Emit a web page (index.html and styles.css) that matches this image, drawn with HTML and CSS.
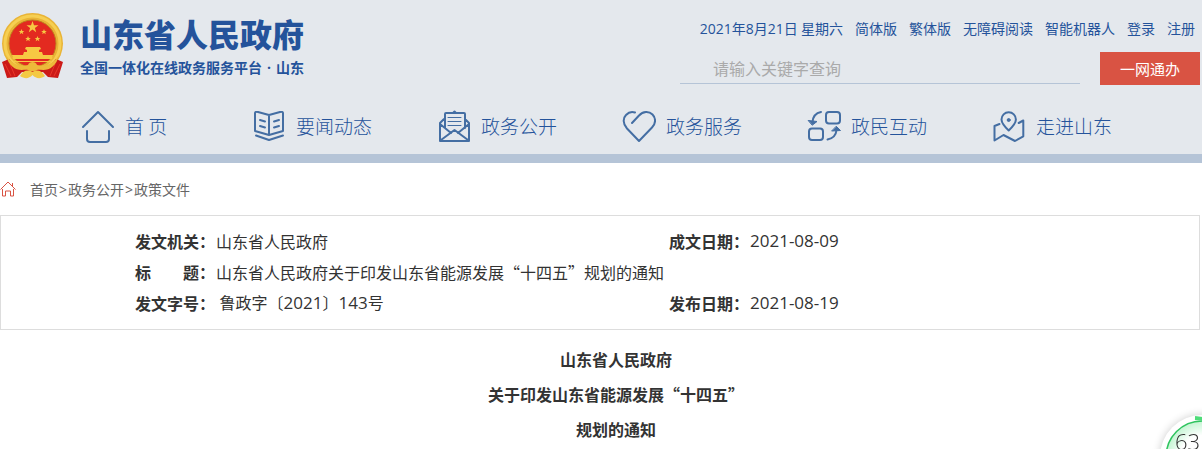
FILE: index.html
```html
<!DOCTYPE html>
<html lang="zh-CN">
<head>
    <meta charset="UTF-8">
    <meta name="viewport" content="width=device-width, initial-scale=1.0">
    <title>山东省人民政府</title>
    <link rel="stylesheet" href="styles.css">
</head>
<body>
    <header class="header">
        <div class="wrap top">
            <a class="logo" href="#">
                <svg class="emblem" viewBox="0 0 64 68" aria-hidden="true">
                    <circle cx="31.5" cy="31.5" r="30.5" fill="#e9b436"/>
                    <circle cx="31.5" cy="31.5" r="27.5" fill="none" stroke="#f6cf52" stroke-width="3"/>
                    <circle cx="31.5" cy="31.5" r="23.5" fill="#e32a20" stroke="#c07d1e"/>
                    <g fill="#f7c843">
                        <path d="M31.5 9l1.500 4.200h4.500l-3.600 2.700 1.300 4.300-3.700-2.600-3.700 2.600 1.300-4.300-3.600-2.700H30z"/>
                        <path d="M20.500 17l.8 2h2l-1.600 1.300.6 2-1.800-1.200-1.800 1.200.6-2-1.600-1.300h2z"/>
                        <path d="M43 17l.8 2h2l-1.600 1.300.6 2L43 21.100l-1.800 1.200.6-2-1.600-1.300h2z"/>
                        <path d="M27 24l.8 2h2l-1.600 1.300.6 2L27 28.100l-1.800 1.200.6-2-1.600-1.300h2z"/>
                        <path d="M36.500 24l.8 2h2l-1.600 1.300.6 2-1.800-1.200-1.800 1.200.6-2-1.600-1.300h2z"/>
                        <path d="M25 35h14l1 2-2 1v2h3l1 3H22l1-3h3v-2l-2-1z"/>
                        <path d="M11 43h41l-1 4H12z"/>
                        <path d="M13 49h37v1H13z"/>
                    </g>
                    <path d="M8 47c6 8 14 11 23.500 11S49 55 55 47l7 3-5 16-10-1-5-5H21l-5 5-10 1L1 50z" fill="#cc1a18"/>
                    <path d="M9 52l5 12M54 52l-5 12M4 52l6 12M59 52l-6 12" stroke="#ea372a" fill="none"/>
                    <path d="M5 43c5 9 14 12 22 10 1-4 8-4 9 0 8 2 17-1 22-10-3 14-14 17-21 14-2 3-9 3-11 0-7 3-18 0-21-14z" fill="#edba3a"/>
                    <path d="M19 64c3-5 7-7 12.500-4 5.500-3 9-1 12.500 4-4 3-9 3-12.500-1-3.500 4-8 4-12.500 1z" fill="#f4c943"/>
                </svg>
                <span class="logo-text">
                    <strong class="site-name">山东省人民政府</strong>
                    <span class="site-sub">全国一体化在线政务服务平台<i class="dot">·</i>山东</span>
                </span>
            </a>
            <div class="tools">
                <div class="links">
                    <span><span class="num">2021</span>年<span class="num">8</span>月<span class="num">21</span>日 星期六</span>
                    <a href="#">简体版</a>
                    <a href="#">繁体版</a>
                    <a href="#">无障碍阅读</a>
                    <a href="#">智能机器人</a>
                    <a href="#">登录</a>
                    <a href="#">注册</a>
                </div>
                <form class="search">
                    <input type="text" name="keyword" placeholder="请输入关键字查询" aria-label="请输入关键字查询">
                    <button type="button">一网通办</button>
                </form>
            </div>
        </div>
        <nav class="wrap nav">
            <a href="#">
                <svg class="icon" viewBox="0 0 34 34" aria-hidden="true"><path d="M2 17L17 2l15 15M6 21v8q0 3 3 3h16q3 0 3-3v-8"/></svg>
                <span>首 页</span>
            </a>
            <a href="#">
                <svg class="icon" viewBox="0 0 34 34" aria-hidden="true"><path d="M17 5L6 2q-3-.5-3 1v18l14 4 14-4V3q0-1.500-3-1L17 5v20M4 25.500l13 4.500 14-4.500"/><path d="M8 10l5 1.500M8 16l5 1.500M27 10l-5 1.500M27 16l-5 1.500"/></svg>
                <span>要闻动态</span>
            </a>
            <a href="#">
                <svg class="icon" viewBox="0 0 34 34" aria-hidden="true"><path d="M8 18V4q0-1 1-1h18q1 0 1 1v14M16 3l1.500-1.500L19 3M7 9l-4 4v18h29V13l-4-4M3 14l11 9M32 14l-11 9M4 30l13.500-10L31 30"/><path class="thin" d="M11 7.500h13M11 11.500h13M11 15.500h13"/></svg>
                <span>政务公开</span>
            </a>
            <a href="#">
                <svg class="icon" viewBox="0 0 34 34" aria-hidden="true"><path d="M10 13l7-7.500C21 1 27 1 30.500 4.500s3.500 9-.5 13L17 31 5 18.500C.5 13.500 1 8 4 5c2.500-2.700 6-3.500 9-2.500"/></svg>
                <span>政务服务</span>
            </a>
            <a href="#">
                <svg class="icon" viewBox="0 0 34 34" aria-hidden="true"><rect x="19" y="2" width="14" height="11.500" rx="3"/><rect x="2" y="18.500" width="14" height="11.500" rx="3"/><path d="M14 2C9 3 6 6 5.500 12M20.500 29.500c5-1 8.500-3.500 9-9.500"/><path class="fill" d="M1.500 10.500l8.500 1-4.500 3.500zM25 21l8.500-.5-4-4z"/></svg>
                <span>政民互动</span>
            </a>
            <a href="#">
                <svg class="icon" viewBox="0 0 34 34" aria-hidden="true"><path d="M16.700 20.500C12 16 9.500 13 9.500 9.500a7.200 7.200 0 0 1 14.400 0c0 3.500-2.500 6.500-7.200 11zM7.500 14l-5 2v14.500l9-5.500 11.500 6 8.300-4.700V10.500l-4.600 2.500"/><circle class="fill" cx="16.700" cy="10" r="1.500"/></svg>
                <span>走进山东</span>
            </a>
        </nav>
    </header>
    <main class="wrap">
        <div class="crumb">
            <svg class="home" viewBox="0 0 16 16" aria-hidden="true"><path d="M.5 8.500L8 1l7.500 7.500M12.500 2v3M2.500 8v7h3v-5h5v5h3V8"/></svg>
            <span><a href="#">首页</a><span class="sep">&gt;</span><a href="#">政务公开</a><span class="sep">&gt;</span><a href="#">政策文件</a></span>
        </div>
        <div class="info">
            <table>
                <tr>
                    <th>发文机关：</th>
                    <td class="wide">山东省人民政府</td>
                    <th>成文日期：</th>
                    <td><span class="num">2021-08-09</span></td>
                </tr>
                <tr>
                    <th>标　　题：</th>
                    <td colspan="3">山东省人民政府关于印发山东省能源发展“十四五”规划的通知</td>
                </tr>
                <tr>
                    <th>发文字号：</th>
                    <td>&nbsp;鲁政字〔<span class="num">2021</span>〕<span class="num">143</span>号</td>
                    <th>发布日期：</th>
                    <td><span class="num">2021-08-19</span></td>
                </tr>
            </table>
        </div>
        <article class="article">
            <p>山东省人民政府</p>
            <p>关于印发山东省能源发展“十四五”</p>
            <p>规划的通知</p>
        </article>
    </main>
    <div class="score">
        <svg viewBox="0 0 84 84" aria-hidden="true">
            <defs>
                <radialGradient id="glow">
                    <stop offset="0.600" stop-color="#fff"/>
                    <stop offset="1" stop-color="#c3f5d2"/>
                </radialGradient>
            </defs>
            <circle cx="42" cy="42" r="36" fill="url(#glow)" stroke="#2fc45f" stroke-width="1.500"/>
            <path d="M35 3a39.500 39.500 0 0 1 7 78" fill="none" stroke="#4fdc79" stroke-width="4"/>
        </svg>
        <span class="score-num">63</span>
    </div>
</body>
</html>
```
FILE: styles.css
```css
* {
    box-sizing: border-box;
}
body {
    margin: 0;
    font-family: "Noto Sans CJK SC", sans-serif;
    font-size: 16px;
    color: #333;
    background: #fff;
}
a {
    color: inherit;
    text-decoration: none;
}
.num {
    font-family: "Open Sans", sans-serif;
}
.wrap {
    max-width: 1200px;
}
.header {
    background: #e4e8ed;
    border-bottom: 9px solid #b5c4d7;
}
.top {
    display: flex;
    justify-content: space-between;
    height: 100px;
}
.logo {
    display: flex;
    gap: 15px;
    padding: 12px 0 0 1px;
    color: #24539b;
}
.emblem {
    width: 64px;
    height: 68px;
}
.logo-text {
    display: flex;
    flex-direction: column;
}
.site-name {
    font-size: 32px;
    font-weight: 900;
    line-height: 42px;
}
.site-sub {
    font-size: 14px;
    font-weight: 700;
    line-height: 26px;
}
.dot {
    display: inline-block;
    width: 14px;
    font-style: normal;
    font-family: "Open Sans", sans-serif;
    text-align: center;
}
.tools {
    width: 520px;
    padding-top: 17px;
}
.links {
    display: flex;
    justify-content: flex-end;
    gap: 12px;
    padding-right: 5px;
    font-size: 14px;
    line-height: 22px;
    color: #24539b;
}
.search {
    display: flex;
    gap: 20px;
    margin-top: 12px;
}
.search input {
    flex: 1;
    height: 32px;
    padding: 0 33px;
    border: 0;
    border-bottom: 1px solid #b5c4d7;
    background: none;
    font-family: inherit;
    font-size: 16px;
    outline: none;
}
.search input::placeholder {
    color: #aaa;
}
.search button {
    width: 100px;
    height: 33px;
    padding: 0;
    border: 0;
    background: #d95343;
    color: #fff;
    font-family: inherit;
    font-size: 15px;
}
.nav {
    display: grid;
    grid-template-columns: 171fr 185fr 185fr 185fr 185fr 185fr;
    padding: 0 23px 0 81px;
}
.nav a {
    display: flex;
    align-items: center;
    gap: 10px;
    height: 54px;
    font-size: 19px;
    font-weight: 300;
    color: #24539b;
}
.nav span {
    padding-bottom: 3px;
}
.icon {
    width: 34px;
    height: 34px;
    fill: none;
    stroke: #446ea3;
    stroke-width: 2;
    stroke-linecap: round;
    stroke-linejoin: round;
}
.icon .thin {
    stroke-width: 1;
}
.icon .fill {
    fill: #446ea3;
    stroke-width: 1;
}
.crumb {
    display: flex;
    align-items: center;
    gap: 14px;
    height: 52px;
    font-size: 14px;
    line-height: 20px;
    color: #666;
}
.sep {
    padding: 0 1px;
    font-family: "Open Sans", sans-serif;
}
.home {
    width: 16px;
    height: 16px;
    fill: none;
    stroke: #d95343;
}
.info {
    padding: 9px 0 11px 134px;
    border: 1px solid #ddd;
}
.info table {
    width: 100%;
    border-collapse: collapse;
    table-layout: fixed;
}
.info th,
.info td {
    height: 31px;
    padding: 0;
    line-height: 24px;
    text-align: left;
}
.info th {
    width: 81px;
}
.info .wide {
    width: 453px;
}
.info .num {
    font-size: 17px;
}
.article {
    padding-top: 12px;
}
.article p {
    margin: 0;
    font-weight: 700;
    line-height: 35px;
    text-align: center;
    text-indent: 2em;
}
.score {
    position: fixed;
    right: -42px;
    bottom: -50px;
    width: 84px;
    height: 84px;
    border-radius: 50%;
    background: #fff;
    box-shadow: 0 0 8px rgba(0, 0, 0, 0.2);
}
.score svg {
    display: block;
}
.score-num {
    position: absolute;
    left: 15px;
    top: 10px;
    font-family: "Open Sans", sans-serif;
    font-size: 22px;
    font-weight: 300;
    line-height: 32px;
}
```
